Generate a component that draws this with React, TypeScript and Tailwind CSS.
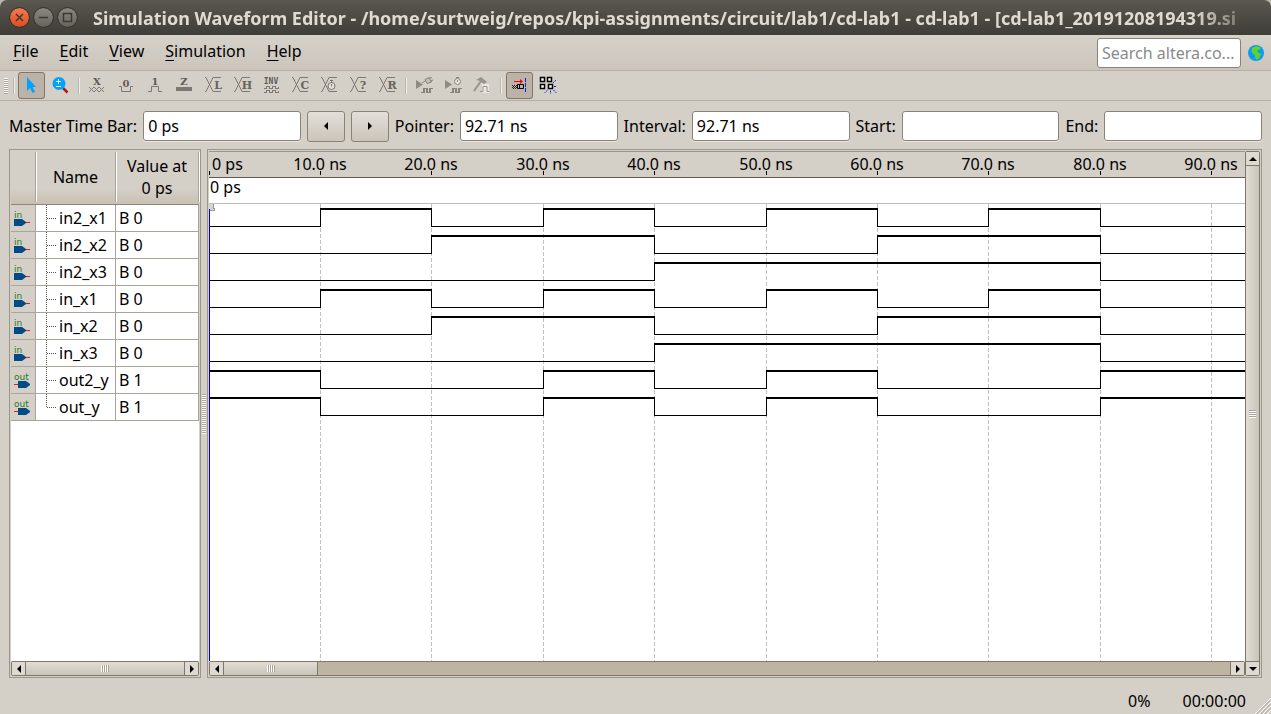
import type { ReactNode } from "react";

type Signal = { name: string; value: string; out?: boolean; start: number; edges: number[] };

const signals: Signal[] = [
  { name: "in2_x1", value: "B 0", start: 0, edges: [1, 2, 3, 4, 5, 6, 7, 8] },
  { name: "in2_x2", value: "B 0", start: 0, edges: [2, 4, 6, 8] },
  { name: "in2_x3", value: "B 0", start: 0, edges: [4, 8] },
  { name: "in_x1", value: "B 0", start: 0, edges: [1, 2, 3, 4, 5, 6, 7, 8] },
  { name: "in_x2", value: "B 0", start: 0, edges: [2, 4, 6, 8] },
  { name: "in_x3", value: "B 0", start: 0, edges: [4, 8] },
  { name: "out2_y", value: "B 1", out: true, start: 1, edges: [1, 3, 4, 5, 6, 8] },
  { name: "out_y", value: "B 1", out: true, start: 1, edges: [1, 3, 4, 5, 6, 8] },
];

const tickX = (i: number) => Math.floor(i * 111.4);
const ticks = Array.from({ length: 10 }, (_, i) => i);
const grey = "#7d7972";

function Wave({ signal, row }: { signal: Signal; row: number }) {
  const high = 57 + row * 27;
  const low = high + 18;
  const points = [0, ...signal.edges.map(tickX), 4000];
  return (
    <g>
      {points.slice(0, -1).map((x, i) => {
        const up = (signal.start + i) % 2 === 1;
        const width = points[i + 1] - x + 1;
        return (
          <g key={x} fill="#000">
            <rect x={x} y={up ? high : low} width={width} height={up ? 2 : 1} />
            {i > 0 && <rect x={x} y={high} width="1" height="18" />}
          </g>
        );
      })}
    </g>
  );
}

function Chart() {
  return (
    <svg className="block w-full min-h-[400px] flex-1 bg-white font-['Noto_Sans',sans-serif] text-base" shapeRendering="crispEdges" role="img" aria-label="Waveforms">
      <rect width="100%" height="26" fill="#d4cfc7" />
      <rect width="100%" height="1" fill="#9b968c" />
      <rect y="26" width="100%" height="1" fill="#5f5b54" />
      <rect y="52" width="100%" height="1" fill="#bdbdbd" />
      {ticks.map((i) => (
        <g key={i}>
          <text x={i === 0 ? 3 : tickX(i)} y="19" textAnchor={i === 0 ? "start" : "middle"}>
            {i === 0 ? "0 ps" : `${i * 10}.0 ns`}
          </text>
          <rect x={tickX(i)} y="20" width="1" height="4" />
          {i > 0 && <line x1={tickX(i) + 0.5} x2={tickX(i) + 0.5} y1="53" y2="100%" stroke="#c0c0c0" strokeDasharray="4 2" />}
        </g>
      ))}
      <text x="1" y="42">0 ps</text>
      {signals.map((s, i) => (
        <Wave key={s.name} signal={s} row={i} />
      ))}
      <path d="M0 53h4v4h2v3H0z" fill="#d4d4d4" />
      <path d="M4.500 53v4h1v2.500H0" fill="none" stroke="#9a9a9a" />
      <rect y="58" width="1" height="100%" fill="#0000c8" />
    </svg>
  );
}

function PinIcon({ out }: { out?: boolean }) {
  return (
    <svg width="24" height="26" className="block">
      <text x="3" y="13" fontSize="9" fill="#1f7a28" className="font-['DejaVu_Sans',sans-serif]">
        {out ? "out" : "in"}
      </text>
      {out ? (
        <>
          <path d="M3 17.500h5" stroke="#f01818" />
          <path d="M7 14h8l4 3v1l-4 3H7z" fill="#004a86" />
        </>
      ) : (
        <>
          <path d="M14 17.500h5" stroke="#f01818" />
          <path d="M3 14h8l4 3v1l-4 3H3z" fill="#004a86" />
        </>
      )}
    </svg>
  );
}

function Icon({ children }: { children: ReactNode }) {
  return (
    <svg width="27" height="27" viewBox="0 0 27 27" fill="none" stroke={grey} className="block">
      {children}
    </svg>
  );
}

function Letter({ y, children, size = 10 }: { y: number; children: string; size?: number }) {
  return (
    <text x="13" y={y} fontSize={size} fontWeight="700" textAnchor="middle" fill="#5f5b55" stroke="none" className="font-['DejaVu_Serif',serif]">
      {children}
    </text>
  );
}

function BusIcon({ letter, children }: { letter?: string; children?: ReactNode }) {
  return (
    <Icon>
      <path d="M5 5.500h1l7 14h8M5 19.500h1l7-14h8" />
      {letter && (
        <text x="18" y="17" fontSize="11" fontWeight="700" textAnchor="middle" fill="#68645e" stroke="none" className="font-['DejaVu_Serif',serif]">
          {letter}
        </text>
      )}
      {children}
    </Icon>
  );
}

const RunShape = () => (
  <>
    <path d="M5 8l7 4.500L5 17z" fill="#8f8b83" stroke="none" />
    <path d="M10 20.500h3v-4h3v4h3v-4h2.500" stroke="#87837b" strokeWidth="1.500" shapeRendering="crispEdges" />
  </>
);

function ToolButton({ label, pressed, children }: { label: string; pressed?: boolean; children: ReactNode }) {
  return (
    <button
      type="button"
      aria-label={label}
      aria-pressed={pressed}
      className={
        pressed
          ? "flex size-[27px] items-center justify-center rounded-[3px] bg-[#bbb3a7] outline-1 -outline-offset-1 outline-[#7f7869]"
          : "flex size-[27px] items-center justify-center rounded-[3px]"
      }
    >
      {children}
    </button>
  );
}

const Separator = () => <span className="mx-[2px] h-4 w-[2px] border-l border-[#bbb5aa] bg-[#f1eee9]" />;

function Toolbar() {
  return (
    <div className="flex h-[30px] items-center gap-[2px] border-b border-[#b5afa5] pl-1" role="toolbar" aria-label="Waveform tools">
      <span className="h-4 w-1 bg-[repeating-linear-gradient(to_bottom,#fff_0_1px,#aaa398_1px_2px)]" />
      <span className="ml-[3px] mr-[1px] h-4 w-[2px] border-l border-[#bbb5aa] bg-[#f1eee9]" />
      <ToolButton label="Selection tool" pressed>
        <Icon><path d="M9 5v14l3-3 2.500 5 2.500-1.200L14.500 15H18z" fill="#00a2ff" stroke="none" /></Icon>
      </ToolButton>
      <ToolButton label="Zoom tool">
        <Icon>
          <path d="M16 16l4.500 4.500" stroke="#b01818" strokeWidth="2.500" />
          <circle cx="12" cy="11.500" r="6.500" fill="#00a2ff" stroke="none" />
          <path d="M9 9.500h5M11.500 7v5M9 14.500h5" stroke="#fff" shapeRendering="crispEdges" />
        </Icon>
      </ToolButton>
      <Separator />
      <ToolButton label="Forcing unknown">
        <Icon>
          <Letter y={13}>X</Letter>
          <path d="M5 15l2.500 2.500L10 20l2.500-2.500L15 20l2.500-2.500L20 20M5 20l5-5 5 5 5-5M10 15l2.500 2.500L15 15l2.500 2.500" />
        </Icon>
      </ToolButton>
      <ToolButton label="Forcing low">
        <Icon><Letter y={15}>0</Letter><path d="M6 14.500h2.500v5h9v-5H20" /></Icon>
      </ToolButton>
      <ToolButton label="Forcing high">
        <Icon><Letter y={13}>1</Letter><path d="M6 19.500h3.500v-5h7v5H20" /></Icon>
      </ToolButton>
      <ToolButton label="High impedance">
        <Icon><Letter y={13}>Z</Letter><path d="M5 15h16v4H5z" fill={grey} stroke="none" /></Icon>
      </ToolButton>
      <ToolButton label="Weak low"><BusIcon letter="L" /></ToolButton>
      <ToolButton label="Weak high"><BusIcon letter="H" /></ToolButton>
      <ToolButton label="Invert">
        <Icon>
          <text x="13" y="12" fontSize="8" fontWeight="700" textAnchor="middle" fill="#5f5b55" stroke="none" className="font-['DejaVu_Sans_Mono',monospace]">INV</text>
          <path d="M6 16.500h2v-2h3v2h3v-2h3v2h3v-2M6 20.500h2v-2h3v2h3v-2h3v2h3v-2" shapeRendering="crispEdges" />
        </Icon>
      </ToolButton>
      <ToolButton label="Count value"><BusIcon letter="C" /></ToolButton>
      <ToolButton label="Overwrite clock">
        <BusIcon>
          <circle cx="15.500" cy="14" r="3.500" fill="#e4e0da" />
          <path d="M14 8.500h3M15.500 8v3M15.500 12v2.500" />
        </BusIcon>
      </ToolButton>
      <ToolButton label="Arbitrary value"><BusIcon letter="?" /></ToolButton>
      <ToolButton label="Random values"><BusIcon letter="R" /></ToolButton>
      <Separator />
      <ToolButton label="Run functional simulation">
        <Icon>
          <RunShape />
          <path d="M11 11l3-2" stroke="#8c8880" />
          <path d="M14 7.500l4-2 2.500 4.500-4.500 1.500zM18 6.500l3-1M19.500 9l2.500-1" stroke="#87837b" fill="#c3beb6" />
        </Icon>
      </ToolButton>
      <ToolButton label="Run timing simulation">
        <Icon>
          <RunShape />
          <circle cx="17.500" cy="9.500" r="3" fill="#e8e5e0" stroke="#87837b" />
          <path d="M16 5.500h3M17.500 8v2" stroke="#87837b" />
        </Icon>
      </ToolButton>
      <ToolButton label="Generate test bench">
        <Icon>
          <path d="M5 19l7-10" stroke="#98948c" strokeWidth="2" />
          <path d="M7 8l5-3 6 5-3 2-4-3z" fill="#98948c" stroke="none" />
          <path d="M13 12h7v9h-7z" fill="#ebe8e3" stroke="none" />
          <path d="M11 19.500h3v-5h4v5h2" stroke="#98948c" />
        </Icon>
      </ToolButton>
      <Separator />
      <ToolButton label="Snap to transition" pressed>
        <Icon>
          <path d="M6 13.500h5M7 14.500h4M6 15.500h5M7 16.500h4" stroke="#222" strokeDasharray="1 1" />
          <path d="M11.500 12.500h6v4h-6zM13.500 12.500v4" stroke="#000" />
          <path d="M8 9.500h6" stroke="#f00" />
          <path d="M14 7l3 2.500-3 2.500z" fill="#f00" stroke="none" />
          <path d="M19.500 6v15" stroke="#1020e0" strokeDasharray="4 1" />
        </Icon>
      </ToolButton>
      <ToolButton label="Snap to grid">
        <Icon>
          <path d="M5.500 5.500h4v4h-4zM12.500 5.500h4v4h-4zM5.500 12.500h4v4h-4zM13.500 12.500h4v4h-4z" fill="#fff" stroke="#000" strokeWidth="1.500" />
          <path d="M18 11l3-3M19 14.500h3M18.500 18l3 3M15.500 18.500V22M12.500 18l-3 3" stroke="#1020e0" strokeDasharray="2 1" />
        </Icon>
      </ToolButton>
    </div>
  );
}

function Field({ label, value }: { label: string; value?: string }) {
  return (
    <label className="flex flex-auto items-center gap-[6px]">
      <span className="whitespace-nowrap">{label}</span>
      <input
        defaultValue={value}
        className="h-[30px] w-[157px] flex-auto rounded-[3px] border border-[#8a8375] bg-white px-1 shadow-[0_1px_0_#e9e6e1]"
      />
    </label>
  );
}

function Arrow({ dir }: { dir: "left" | "right" | "up" | "down" }) {
  const shapes = {
    left: "M6 0v8L2 4z",
    right: "M2 0v8l4-4z",
    up: "M0 6h8L4 2z",
    down: "M0 2h8L4 6z",
  };
  return (
    <svg width="8" height="8" className="block">
      <path d={shapes[dir]} fill="#000" />
    </svg>
  );
}

function StepButton({ dir }: { dir: "left" | "right" }) {
  return (
    <button
      type="button"
      aria-label={dir === "left" ? "Previous transition" : "Next transition"}
      className="flex h-[31px] w-[38px] shrink-0 items-center justify-center rounded-[3px] border border-[#8a8375] bg-linear-to-b from-[#e3dfd8] to-[#cbc5bb]"
    >
      <Arrow dir={dir} />
    </button>
  );
}

function HScroll({ partial }: { partial?: boolean }) {
  return (
    <div className="flex h-[15px] shrink-0 rounded-[2px] border border-[#7f7869] bg-[#bdb4a1]">
      <button type="button" aria-label="Scroll left" className="flex w-[14px] shrink-0 items-center justify-center border-r border-[#7f7869] bg-[#dedad2]">
        <Arrow dir="left" />
      </button>
      <div className={partial ? "flex w-[94px] items-center justify-center border-r border-[#7f7869] bg-linear-to-b from-[#e1ddd5] to-[#c9c4b9]" : "flex flex-1 items-center justify-center bg-linear-to-b from-[#e1ddd5] to-[#c9c4b9]"}>
        <span className="h-[7px] w-2 bg-[repeating-linear-gradient(to_right,#fff_0_1px,#aaa398_1px_2px)]" />
      </div>
      <button type="button" aria-label="Scroll right" className="ml-auto flex w-[14px] shrink-0 items-center justify-center border-l border-[#7f7869] bg-[#dedad2]">
        <Arrow dir="right" />
      </button>
    </div>
  );
}

function VScroll() {
  return (
    <div className="flex w-[15px] shrink-0 flex-col rounded-[2px] border border-[#7f7869]">
      <button type="button" aria-label="Scroll up" className="flex h-[14px] items-center justify-center border-b border-[#7f7869] bg-[#dedad2]">
        <Arrow dir="up" />
      </button>
      <div className="flex flex-1 items-center justify-center bg-linear-to-r from-[#e1ddd5] to-[#c9c4b9]">
        <span className="h-2 w-[7px] bg-[repeating-linear-gradient(to_bottom,#aaa398_0_1px,#fff_1px_2px)]" />
      </div>
      <button type="button" aria-label="Scroll down" className="flex h-[14px] items-center justify-center border-t border-[#7f7869] bg-[#dedad2]">
        <Arrow dir="down" />
      </button>
    </div>
  );
}

function TreeLines({ last }: { last: boolean }) {
  return (
    <svg width="12" height="27" className="block shrink-0" stroke="#555" shapeRendering="crispEdges">
      <line x1="0.500" x2="0.500" y1="0" y2={last ? 14 : 27} strokeDasharray="1 1" />
      <line x1="1" x2="10" y1="13.500" y2="13.500" strokeDasharray="1 1" />
    </svg>
  );
}

function SignalTable() {
  return (
    <table className="w-full table-fixed border-separate border-spacing-0">
      <colgroup>
        <col className="w-[25px]" />
        <col className="w-20" />
        <col />
      </colgroup>
      <thead>
        <tr className="h-[54px] bg-linear-to-b from-[#d4cfc7] from-70% to-[#c8bfb1]">
          {["", "Name", "Value at 0 ps"].map((h) => (
            <th key={h} className="border-b border-[#8f8878] p-0 pb-[2px] font-normal leading-[22px]">
              <span className="flex h-[50px] items-center justify-center border-r border-[#aaa59b] px-2 shadow-[1px_0_0_#fff]">{h}</span>
            </th>
          ))}
        </tr>
      </thead>
      <tbody>
        {signals.map((s, i) => (
          <tr key={s.name} className="h-[27px]">
            <td className="border-b border-r border-[#aaa59b] bg-[#d4cfc7] p-0"><PinIcon out={s.out} /></td>
            <td className="border-b border-r border-[#aaa59b] p-0">
              <div className="flex h-[26px] items-center overflow-hidden whitespace-nowrap pl-[10px]">
                <TreeLines last={i === signals.length - 1} />
                <span className="pl-px">{s.name}</span>
              </div>
            </td>
            <td className="border-b border-r border-[#aaa59b] p-0 pl-[3px] leading-[26px]">{s.value}</td>
          </tr>
        ))}
      </tbody>
    </table>
  );
}

function WindowButton({ label, close, children }: { label: string; close?: boolean; children: ReactNode }) {
  return (
    <button
      type="button"
      aria-label={label}
      className={
        close
          ? "flex size-[19px] items-center justify-center rounded-full bg-linear-to-b from-[#f4794f] to-[#dd4c1f] outline-1 outline-[#35342f]"
          : "flex size-[19px] items-center justify-center rounded-full bg-linear-to-b from-[#8a8880] to-[#65635c] outline-1 outline-[#35342f]"
      }
    >
      <svg width="11" height="11" fill="none" stroke="#3a3833" strokeWidth="1.500">{children}</svg>
    </button>
  );
}

export default function App() {
  return (
    <div className="flex min-h-screen flex-col bg-[#d4cfc7] font-['Noto_Sans',sans-serif] text-base leading-6 text-black">
      <div className="bg-[#b9b5ac]">
        <header className="flex h-[35px] items-center rounded-t-[7px] bg-linear-to-b from-[#5a584f] to-[#3e3d38] pl-[10px] pr-2">
          <div className="flex shrink-0 gap-[5px] pr-4">
            <WindowButton label="Close" close><path d="M2 2l7 7M9 2l-7 7" /></WindowButton>
            <WindowButton label="Minimize"><path d="M1 5.500h9" /></WindowButton>
            <WindowButton label="Maximize"><path d="M1.500 1.500h8v8h-8z" /></WindowButton>
          </div>
          <h1 className="min-w-0 flex-1 overflow-hidden whitespace-nowrap text-lg font-bold leading-7 text-[#dfdbd2] [mask-image:linear-gradient(to_right,black_94%,transparent)]">
            Simulation Waveform Editor - /home/surtweig/repos/kpi-assignments/circuit/lab1/cd-lab1 - cd-lab1 - [cd-lab1_20191208194319.si
          </h1>
        </header>
      </div>

      <nav className="flex h-9 items-center justify-between border-b border-[#b5afa5] bg-linear-to-b from-[#d6d1c9] to-[#cbc5bc] pl-[13px] pr-[7px]">
        <div className="flex gap-[21px] pb-1">
          {["File", "Edit", "View", "Simulation", "Help"].map((m) => (
            <button type="button" key={m}>
              <span className="underline decoration-1 underline-offset-[3px]">{m[0]}</span>{m.slice(1)}
            </button>
          ))}
        </div>
        <div className="flex items-center gap-[7px]">
          <input
            type="text"
            aria-label="Search altera.com"
            placeholder="Search altera.co..."
            className="h-[30px] w-36 rounded-[3px] border border-[#8a8375] bg-white px-1 placeholder:text-[#8a8a8a]"
          />
          <svg width="16" height="16" viewBox="0 0 16 16" role="img" aria-label="Web">
            <circle cx="8" cy="8" r="8" fill="#0a9cf5" />
            <path d="M4 3l4-2 4 1 .500 2L10 5 9 7l2 1 2 1-1 3-3 3-2-2V10L5 9 3.500 6z" fill="#5fd32a" />
          </svg>
        </div>
      </nav>

      <Toolbar />

      <div className="flex h-12 items-center gap-[6px] px-[9px] pt-[2px]">
        <Field label="Master Time Bar:" value="0 ps" />
        <StepButton dir="left" />
        <StepButton dir="right" />
        <Field label="Pointer:" value="92.71 ns" />
        <Field label="Interval:" value="92.71 ns" />
        <Field label="Start:" />
        <Field label="End:" />
      </div>

      <main className="flex flex-1 px-[9px]">
        <section className="flex w-48 shrink-0 flex-col border border-[#9b968c] p-px">
          <div className="flex-1 bg-white"><SignalTable /></div>
          <HScroll />
        </section>
        <div className="flex w-[6px] shrink-0 items-center justify-center">
          <span className="h-10 w-1 bg-[repeating-linear-gradient(to_bottom,#aaa398_0_1px,#fff_1px_2px)]" />
        </div>
        <section className="flex min-w-0 flex-1 border border-[#9b968c] p-px">
          <div className="flex min-w-0 flex-1 flex-col">
            <Chart />
            <HScroll partial />
          </div>
          <VScroll />
        </section>
      </main>

      <footer className="flex h-9 items-end justify-end">
        <div className="flex gap-8 self-center pr-[9px] pt-[10px]">
          <span>0%</span>
          <span>00:00:00</span>
        </div>
        <svg width="16" height="16" stroke="#fff" aria-hidden="true">
          <path d="M0 16L16 0M4 16L16 4M8 16L16 8M12 16l4-4" />
          <path d="M1.500 16L16 1.500M5.500 16L16 5.500M9.500 16L16 9.500" stroke="#aaa398" />
        </svg>
      </footer>
    </div>
  );
}
